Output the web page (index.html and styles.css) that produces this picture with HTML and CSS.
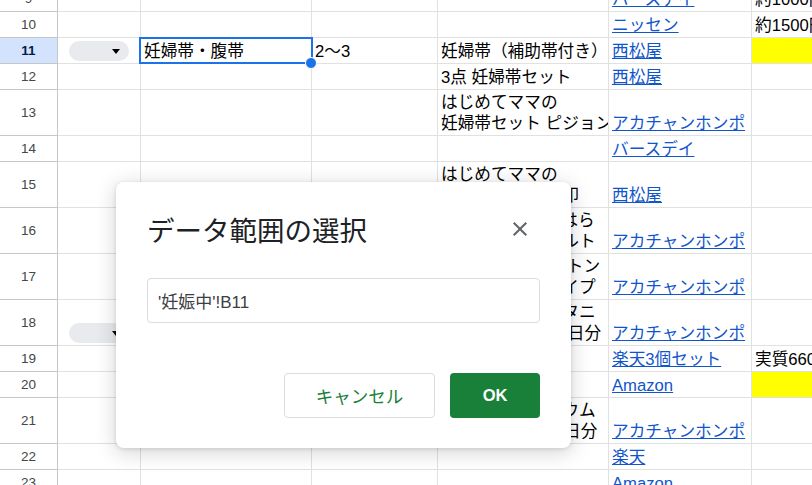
FILE: index.html
```html
<!DOCTYPE html>
<html lang="ja">
<head>
<meta charset="utf-8">
<title>データ範囲の選択</title>
<link rel="stylesheet" href="styles.css">
</head>
<body>
<div class="sheet">
  <div class="grid">
    <div class="row"><div class="h">9</div><div class="c"></div><div class="c"></div><div class="c"></div><div class="c"></div><div class="c"><a class="lk">バースデイ</a></div><div class="c">約1000円</div></div>
    <div class="row"><div class="h">10</div><div class="c"></div><div class="c"></div><div class="c"></div><div class="c"></div><div class="c"><a class="lk">ニッセン</a></div><div class="c">約1500円</div></div>
    <div class="row"><div class="h on">11</div><div class="c"><div class="chip"><span class="tri"></span></div></div><div class="c sel"><span class="t">妊婦帯・腹帯</span><div class="selbox"><span class="handle"></span></div></div><div class="c">2〜3</div><div class="c">妊婦帯（補助帯付き）</div><div class="c"><a class="lk">西松屋</a></div><div class="c y"></div></div>
    <div class="row"><div class="h">12</div><div class="c"></div><div class="c"></div><div class="c"></div><div class="c">3点 妊婦帯セット</div><div class="c"><a class="lk">西松屋</a></div><div class="c"></div></div>
    <div class="row tall"><div class="h">13</div><div class="c"></div><div class="c"></div><div class="c"></div><div class="c"><span class="t">はじめてママの<br>妊婦帯セット ピジョン</span></div><div class="c"><a class="lk">アカチャンホンポ</a></div><div class="c"></div></div>
    <div class="row"><div class="h">14</div><div class="c"></div><div class="c"></div><div class="c"></div><div class="c"></div><div class="c"><a class="lk">バースデイ</a></div><div class="c"></div></div>
    <div class="row tall"><div class="h">15</div><div class="c"></div><div class="c"></div><div class="c"></div><div class="c"><span class="t">はじめてママの<br>妊婦帯セット 犬印</span></div><div class="c"><a class="lk">西松屋</a></div><div class="c"></div></div>
    <div class="row tall"><div class="h">16</div><div class="c"></div><div class="c"></div><div class="c"></div><div class="c"><span class="t">マタニティ腹帯 はら<br>まき付き 骨盤ベルト</span></div><div class="c"><a class="lk">アカチャンホンポ</a></div><div class="c"></div></div>
    <div class="row tall"><div class="h">17</div><div class="c"></div><div class="c"></div><div class="c"></div><div class="c"><span class="t">妊婦帯 腹巻 コットン<br>ベルト さらしタイプ</span></div><div class="c"><a class="lk">アカチャンホンポ</a></div><div class="c"></div></div>
    <div class="row tall"><div class="h">18</div><div class="c"><div class="chip"><span class="tri"></span></div></div><div class="c"></div><div class="c"></div><div class="c"><span class="t">ピジョン 葉酸マタニ<br>ティ 葉酸錠剤 30日分</span></div><div class="c"><a class="lk">アカチャンホンポ</a></div><div class="c"></div></div>
    <div class="row"><div class="h">19</div><div class="c"></div><div class="c"></div><div class="c"></div><div class="c"></div><div class="c"><a class="lk">楽天3個セット</a></div><div class="c">実質660円</div></div>
    <div class="row"><div class="h">20</div><div class="c"></div><div class="c"></div><div class="c"></div><div class="c"></div><div class="c"><a class="lk">Amazon</a></div><div class="c y"></div></div>
    <div class="row tall"><div class="h">21</div><div class="c"></div><div class="c"></div><div class="c"></div><div class="c"><span class="t">葉酸＋鉄 カルシウム<br>サプリメント 30日分</span></div><div class="c"><a class="lk">アカチャンホンポ</a></div><div class="c"></div></div>
    <div class="row"><div class="h">22</div><div class="c"></div><div class="c"></div><div class="c"></div><div class="c"></div><div class="c"><a class="lk">楽天</a></div><div class="c"></div></div>
    <div class="row"><div class="h">23</div><div class="c"></div><div class="c"></div><div class="c"></div><div class="c"></div><div class="c"><a class="lk">Amazon</a></div><div class="c"></div></div>
  </div>

  <div class="dialog">
    <div class="dhead">
      <div class="dtitle">データ範囲の選択</div>
      <div class="close"><svg viewBox="0 0 24 24"><path d="M19 6.41L17.59 5 12 10.59 6.41 5 5 6.41 10.59 12 5 17.59 6.41 19 12 13.41 17.59 19 19 17.59 13.41 12z"/></svg></div>
    </div>
    <div class="field">'妊娠中'!B11</div>
    <div class="actions">
      <div class="btn cancel">キャンセル</div>
      <div class="btn ok">OK</div>
    </div>
  </div>
</div>
</body>
</html>
```

FILE: styles.css
```css
* { box-sizing: border-box; }
html, body { margin: 0; padding: 0; background: #fff; overflow: hidden; }

.sheet {
  position: relative;
  width: 812px;
  height: 485px;
  overflow: hidden;
  font-family: "Liberation Sans", "Noto Sans CJK JP", sans-serif;
  color: #000;
}

.grid { margin-top: -14px; width: 951px; }

.row {
  display: grid;
  grid-template-columns: 58px 83px 171px 126px 171px 143px 199px;
  height: 26px;
}
.row.tall { height: 46px; }

.h {
  border-right: 1px solid #c4c7c5;
  border-bottom: 1px solid #c4c7c5;
  display: flex;
  align-items: center;
  justify-content: center;
  font-size: 13.5px;
  color: #444746;
}
.h.on { background: #d3e3fd; font-weight: 700; color: #041e49; }

.c {
  border-right: 1px solid #e1e1e1;
  border-bottom: 1px solid #e1e1e1;
  display: flex;
  align-items: flex-end;
  padding: 0 3px 1px;
  font-size: 16.67px;
  line-height: 21px;
  white-space: nowrap;
  overflow: hidden;
}
.c.y { background: #ffff00; }

.lk { color: #1155cc; text-decoration: underline; }

.chip {
  width: 60px;
  height: 20px;
  margin-left: 8px;
  margin-bottom: 1px;
  background: #e8eaed;
  border-radius: 10px;
  display: flex;
  align-items: center;
  justify-content: flex-end;
  padding-right: 9px;
}
.tri {
  width: 0;
  height: 0;
  border-left: 4.5px solid transparent;
  border-right: 4.5px solid transparent;
  border-top: 5px solid #000;
}

.sel { position: relative; overflow: visible; }
.selbox {
  position: absolute;
  left: -2px;
  top: -1px;
  right: -2px;
  bottom: -1px;
  border: 2px solid #1a73e8;
}
.handle {
  position: absolute;
  right: -6px;
  bottom: -7px;
  width: 12px;
  height: 12px;
  border-radius: 50%;
  background: #1a73e8;
  border: 1px solid #fff;
}

.dialog {
  position: absolute;
  left: 116px;
  top: 182px;
  width: 455px;
  height: 266px;
  background: #fff;
  border-radius: 8px;
  box-shadow: 0 4px 20px 2px rgba(0, 0, 0, 0.15), 0 1px 4px rgba(0, 0, 0, 0.12);
  padding: 29px 31px 30px;
  display: flex;
  flex-direction: column;
}
.dhead {
  display: flex;
  align-items: center;
  justify-content: space-between;
  height: 36px;
}
.dtitle {
  font-family: "Noto Sans CJK JP", sans-serif;
  font-size: 27.5px;
  line-height: 36px;
  font-weight: 400;
  color: #202124;
}
.close {
  width: 40px;
  height: 36px;
  display: flex;
  align-items: center;
  justify-content: center;
}
.close svg { width: 24px; height: 24px; fill: #5f6368; }

.field {
  margin-top: 31px;
  height: 45px;
  border: 1px solid #dadce0;
  border-radius: 4px;
  padding-left: 10px;
  display: flex;
  align-items: center;
  font-size: 17px;
  color: #3c4043;
}

.actions {
  margin-top: 50px;
  display: flex;
  justify-content: flex-end;
  gap: 15px;
}
.btn {
  height: 45px;
  border-radius: 4px;
  display: flex;
  align-items: center;
  justify-content: center;
}
.cancel {
  width: 151px;
  border: 1px solid #dadce0;
  color: #188038;
  font-size: 17.5px;
}
.ok {
  width: 90px;
  background: #188038;
  color: #fff;
  font-weight: 700;
  font-size: 16.5px;
}
```
